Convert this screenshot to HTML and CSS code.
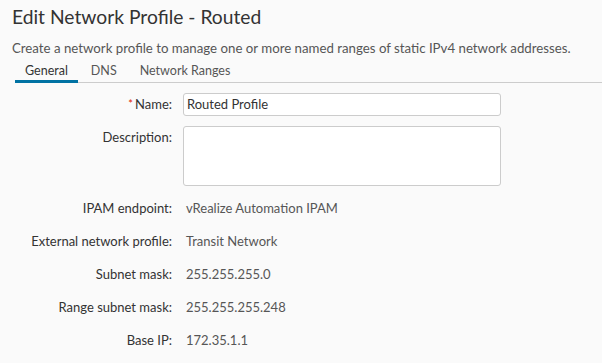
FILE: index.html
```html
<!DOCTYPE html>
<html>
<head>
<meta charset="utf-8">
<link rel="stylesheet" href="styles.css">
</head>
<body>
<div class="page">
  <h1 class="title">Edit Network Profile - Routed</h1>
  <p class="subtitle">Create a network profile to manage one or more named ranges of static IPv4 network addresses.</p>
  <nav class="tabs">
    <span class="tab active">General</span>
    <span class="tab">DNS</span>
    <span class="tab">Network Ranges</span>
  </nav>
  <div class="form">
    <div class="row row-input">
      <label class="label"><span class="req">*</span>Name:</label>
      <div class="input">Routed Profile</div>
    </div>
    <div class="row row-textarea">
      <label class="label">Description:</label>
      <div class="textarea"></div>
    </div>
    <div class="row row-static">
      <span class="label">IPAM endpoint:</span>
      <span class="value">vRealize Automation IPAM</span>
    </div>
    <div class="row row-static">
      <span class="label">External network profile:</span>
      <span class="value">Transit Network</span>
    </div>
    <div class="row row-static">
      <span class="label">Subnet mask:</span>
      <span class="value">255.255.255.0</span>
    </div>
    <div class="row row-static">
      <span class="label">Range subnet mask:</span>
      <span class="value">255.255.255.248</span>
    </div>
    <div class="row row-static">
      <span class="label">Base IP:</span>
      <span class="value">172.35.1.1</span>
    </div>
  </div>
</div>
</body>
</html>
```

FILE: styles.css
```css
html, body {
  margin: 0;
  padding: 0;
  background: #fafafa;
}
body {
  font-family: "Lato", "Open Sans", sans-serif;
  color: #565656;
  width: 602px;
  height: 363px;
  overflow: hidden;
}
.page {
  padding: 0 0 0 12px;
}
.title {
  margin: 0;
  padding-top: 4px;
  font-size: 19.25px;
  font-weight: 400;
  line-height: 26px;
  color: #333;
}
.subtitle {
  margin: 9px 0 0 0;
  font-size: 13.25px;
  line-height: 18px;
  color: #565656;
}
.tabs {
  display: flex;
  margin: 4px 0 0 3px;
  border-bottom: 1px solid #ccc;
}
.tab {
  font-size: 12.5px;
  line-height: 18px;
  padding: 1px 10px 0 10px;
  color: #565656;
  border-bottom: 3px solid transparent;
  margin-bottom: -1px;
  margin-right: 3px;
}
.tab.active {
  color: #333;
  border-bottom-color: #0072a3;
}
.form {
  padding-top: 10px;
}
.row {
  display: flex;
  font-size: 13px;
  line-height: 18px;
}
.label {
  width: 160px;
  text-align: right;
  color: #333;
  flex: none;
  padding-right: 11px;
}
.req {
  color: #e12200;
  font-size: 11px;
  vertical-align: top;
  margin-right: 2px;
}
.row-input .label {
  padding-top: 2px;
}
.input {
  width: 313px;
  height: 20px;
  border: 1px solid #ccc;
  border-radius: 3px;
  background: #fff;
  padding: 1px 0 0 3px;
  color: #333;
}
.row-textarea {
  margin-top: 10px;
}
.row-textarea .label {
  padding-top: 2px;
}
.textarea {
  width: 316px;
  height: 58px;
  border: 1px solid #ccc;
  border-radius: 3px;
  background: #fff;
}
.row-static + .row-static {
  margin-top: 15px;
}
.row-textarea + .row-static {
  margin-top: 13px;
}
.value {
  padding-left: 3px;
  color: #565656;
}
```
